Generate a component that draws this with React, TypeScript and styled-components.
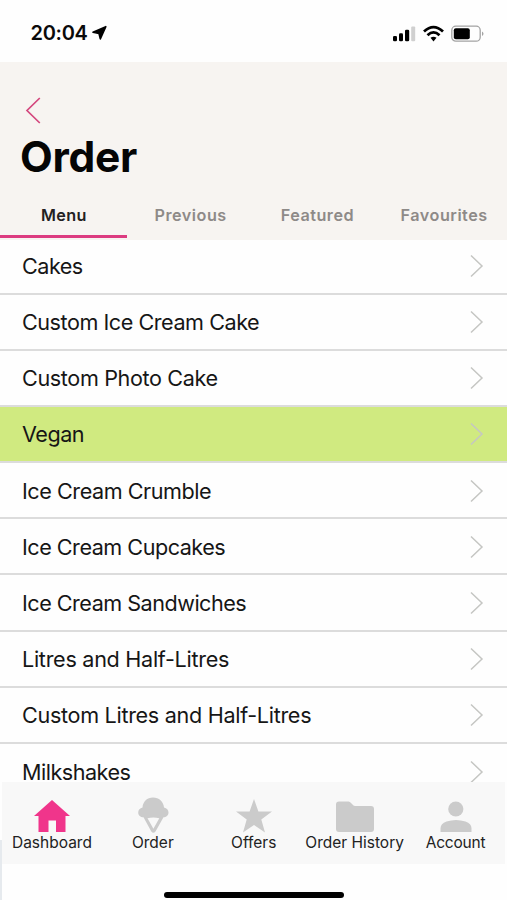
import React from 'react';
import styled, { createGlobalStyle } from 'styled-components';

const GlobalStyle = createGlobalStyle`
  * { box-sizing: border-box; }
  body { margin: 0; background: #fff; }
`;

const Screen = styled.div`
  position: relative;
  width: 507px;
  height: 900px;
  overflow: hidden;
  display: flex;
  flex-direction: column;
  background: #fefefe;
  color: #111;
  font-family: Inter, 'Liberation Sans', sans-serif;
`;

const StatusBar = styled.div`
  flex: none;
  height: 62px;
  padding: 4px 23px 0 30.5px;
  display: flex;
  align-items: center;
  justify-content: space-between;
`;

const Clock = styled.div`
  display: flex;
  align-items: center;
  gap: 3px;
  font-size: 20px;
  line-height: 24px;
  font-weight: 600;
  letter-spacing: -0.3px;
  color: #0a0a0a;
`;

const StatusIcons = styled.div`
  display: flex;
  align-items: center;
  gap: 7px;
`;

const Header = styled.header`
  flex: none;
  height: 178px;
  background: #f7f4f1;
  display: flex;
  flex-direction: column;
`;

const BackButton = styled.button`
  margin: 34px 0 0 24px;
  padding: 0;
  border: 0;
  background: none;
  width: 20px;
  height: 29px;
  display: flex;
`;

const Title = styled.h1`
  margin: 7px 0 0 20px;
  font-size: 42.5px;
  line-height: 50px;
  font-weight: 700;
  letter-spacing: -0.3px;
  color: #050505;
`;

const Tabs = styled.nav`
  margin-top: 16px;
  height: 40px;
  display: grid;
  grid-template-columns: repeat(4, 126.75px);
`;

const Tab = styled.div<{ $active?: boolean }>`
  display: flex;
  justify-content: center;
  padding: 7px 0 0 1px;
  height: 40px;
  font-size: 16.2px;
  line-height: 20px;
  font-weight: 600;
  letter-spacing: ${(p) => (p.$active ? 0.3 : 0.5)}px;
  color: ${(p) => (p.$active ? '#232122' : '#8e8a88')};
  border-bottom: 3px solid ${(p) => (p.$active ? '#dc3b80' : 'transparent')};
`;

const List = styled.ul`
  flex: none;
  list-style: none;
  margin: 0;
  padding: 0;
  height: 542px;
  overflow: hidden;
`;

const Row = styled.li<{ $highlight?: boolean }>`
  height: 56.2px;
  padding: 1px 23px 0 22px;
  display: flex;
  align-items: center;
  justify-content: space-between;
  border-bottom: 2px solid #dcdcdc;
  background: ${(p) => (p.$highlight ? '#d0ea80' : '#fefefe')};
  &:first-child { height: 54.5px; padding-top: 0; }
`;

const RowLabel = styled.span<{ $spacing: number }>`
  font-size: 21.6px;
  line-height: 20px;
  letter-spacing: ${(p) => p.$spacing}px;
  white-space: nowrap;
  color: #161616;
`;

const Footer = styled.footer`
  position: relative;
  flex: none;
  height: 118px;
  &::before {
    content: '';
    position: absolute;
    left: 0;
    top: 58px;
    width: 2px;
    bottom: 0;
    background: #e6eaee;
  }
`;

const TabBar = styled.nav`
  margin: 0 2px;
  height: 82px;
  background: #f8f8f8;
  display: grid;
  grid-template-columns: repeat(5, 100.9px);
`;

const TabItem = styled.div`
  display: flex;
  flex-direction: column;
  align-items: center;
  padding: 15px 1px 0 0;
  svg { flex: none; }
`;

const TabLabel = styled.span<{ $spacing: number }>`
  font-size: 15.5px;
  line-height: 20px;
  letter-spacing: ${(p) => p.$spacing}px;
  white-space: nowrap;
  color: #222;
`;

const HomeIndicator = styled.div`
  width: 180px;
  height: 6px;
  margin: 28px 0 0 164px;
  border-radius: 3px;
  background: #000;
`;

const Chevron = () => (
  <svg width="16" height="26" viewBox="0 0 16 26" fill="none" stroke="#c5c6c3" strokeWidth="1.5">
    <path d="M3 2.5 14 13 3 23.5" />
  </svg>
);

const rows = [
  { label: 'Cakes', spacing: -0.5 },
  { label: 'Custom Ice Cream Cake', spacing: -0.46 },
  { label: 'Custom Photo Cake', spacing: -0.37 },
  { label: 'Vegan', spacing: -0.5, highlight: true },
  { label: 'Ice Cream Crumble', spacing: -0.45 },
  { label: 'Ice Cream Cupcakes', spacing: -0.49 },
  { label: 'Ice Cream Sandwiches', spacing: -0.5 },
  { label: 'Litres and Half-Litres', spacing: -0.29 },
  { label: 'Custom Litres and Half-Litres', spacing: -0.31 },
  { label: 'Milkshakes', spacing: -0.5 },
];

const HomeIcon = () => (
  <svg width="40" height="36" viewBox="0 0 40 36">
    <path fill="#f0358b" d="M20 3 38 19H33.5V35H24V23.5H16.5V35H6.5V19H2Z" />
  </svg>
);

const ConeIcon = () => (
  <svg width="40" height="36" viewBox="0 0 40 36">
    <path
      fill="#cbcbcb"
      fillRule="evenodd"
      d="M20 .5C26 .5 30.500 4.500 31 10.500 33.800 11.300 35.500 13 35.500 15.500 35.500 18.500 33.200 20.300 30.500 20.300L22.500 34.500Q20.300 37 18.300 34.500L10.500 20.300C7.500 20.300 5.200 18.500 5.200 15.500 5.200 13 7 11.300 9.500 10.500 10 4.500 14 .5 20 .5ZM14.500 21.300 20.400 31.800 26.300 21.300Q20.400 19.800 14.500 21.300Z"
    />
  </svg>
);

const StarIcon = () => (
  <svg width="40" height="36" viewBox="0 0 40 36">
    <path fill="#cbcbcb" d="m20 2 4.400 12.500H38L27.300 22.500 31 35.500l-11-7.600-11 7.600 3.700-13L2 14.500h13.600Z" />
  </svg>
);

const FolderIcon = () => (
  <svg width="40" height="36" viewBox="0 0 40 36">
    <path
      fill="#cbcbcb"
      d="M4 4.500h9.500q1.500 0 2.500 1.500l1.500 1.500q1.200 1.500 3 1.500H36q3 0 3 3v20q0 3-3 3H4q-3 0-3-3V7.500q0-3 3-3Z"
    />
  </svg>
);

const AccountIcon = () => (
  <svg width="40" height="36" viewBox="0 0 40 36" fill="#cbcbcb">
    <circle cx="19.800" cy="12" r="7.600" />
    <path d="M4.500 35v-3.500q0-5 6-7 9.500-3 19 0 6 2 6 7V35Z" />
  </svg>
);

const tabs = [
  { label: 'Dashboard', icon: HomeIcon, spacing: 0 },
  { label: 'Order', icon: ConeIcon, spacing: 0 },
  { label: 'Offers', icon: StarIcon, spacing: 0 },
  { label: 'Order History', icon: FolderIcon, spacing: 0 },
  { label: 'Account', icon: AccountIcon, spacing: -0.2 },
];

export default function App() {
  return (
    <>
      <GlobalStyle />
      <Screen>
        <StatusBar>
          <Clock>
            20:04
            <svg width="16" height="16" viewBox="0 0 16 16">
              <path fill="#000" d="M14.800 1.700 9.300 13.800 8 8.500 2 7.200Z" stroke="#000" strokeWidth="1.600" strokeLinejoin="round" />
            </svg>
          </Clock>
          <StatusIcons>
            <svg width="23" height="17" viewBox="0 0 23 17">
              <rect x="0" y="11" width="4" height="5.300" rx="1.300" />
              <rect x="6" y="8.200" width="4" height="8.100" rx="1.300" />
              <rect x="12" y="4.700" width="4.200" height="11.600" rx="1.300" />
              <rect x="18.200" y="1.500" width="4" height="14.800" rx="1" fill="#d0d0d0" />
            </svg>
            <svg width="21" height="17" viewBox="0 0 21 17" fill="none" stroke="#000" strokeWidth="2.800">
              <path d="M1 6.500Q10.500-2.300 20 6.500" />
              <path d="M4.500 10.200Q10.500 4.600 16.500 10.200" />
              <path d="m7.500 12.800q3-2.200 6 0l-3 3.600Z" fill="#000" stroke="none" />
            </svg>
            <svg width="33" height="17" viewBox="0 0 33 17">
              <rect x=".8" y="1.200" width="28.400" height="15" rx="4" fill="none" stroke="#a3a3a3" strokeWidth="1.300" />
              <rect x="2.800" y="3.200" width="16" height="11" rx="2" />
              <path d="M31 6.500q3 2.200 0 4.500Z" fill="#a3a3a3" />
            </svg>
          </StatusIcons>
        </StatusBar>
        <Header>
          <BackButton aria-label="Back">
            <svg width="20" height="29" viewBox="0 0 20 29" fill="none" stroke="#d4487e" strokeWidth="1.700">
              <path d="M15.800 2 3 14.500 15.800 27" />
            </svg>
          </BackButton>
          <Title>Order</Title>
          <Tabs>
            <Tab $active>Menu</Tab>
            <Tab>Previous</Tab>
            <Tab>Featured</Tab>
            <Tab>Favourites</Tab>
          </Tabs>
        </Header>
        <List>
          {rows.map((row) => (
            <Row key={row.label} $highlight={row.highlight}>
              <RowLabel $spacing={row.spacing}>{row.label}</RowLabel>
              <Chevron />
            </Row>
          ))}
        </List>
        <Footer>
          <TabBar>
            {tabs.map(({ label, icon: Icon, spacing }) => (
              <TabItem key={label}>
                <Icon />
                <TabLabel $spacing={spacing}>{label}</TabLabel>
              </TabItem>
            ))}
          </TabBar>
          <HomeIndicator />
        </Footer>
      </Screen>
    </>
  );
}
